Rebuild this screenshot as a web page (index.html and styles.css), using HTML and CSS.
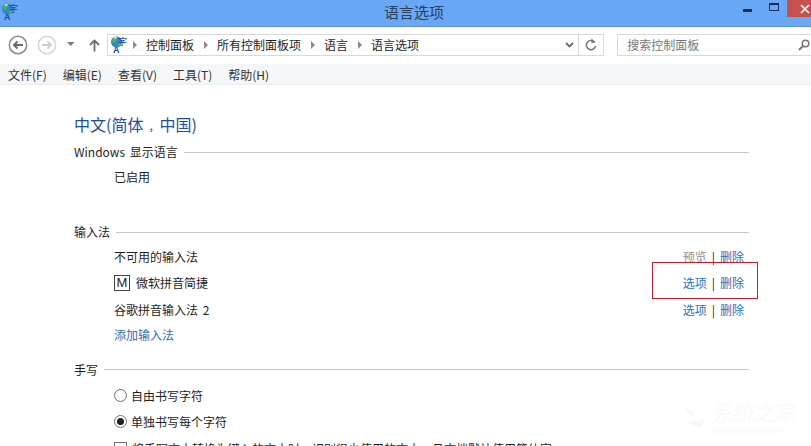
FILE: index.html
```html
<!DOCTYPE html>
<html lang="zh">
<head>
<meta charset="utf-8">
<title>语言选项</title>
<link rel="stylesheet" href="styles.css">
</head>
<body>
<div class="window">
  <header class="titlebar">
    <svg class="app-icon" width="17" height="17" viewBox="0 0 17 17"><circle cx="6.500" cy="6" r="5.500" fill="#2b86d6"/><path d="M2 3.500l3-2.500 2 1-.5 2.500-2 2.500-2-1zM8 8l2-1 1 1-2 3-1.500-.5z" fill="#5cb04a"/><path d="M4 1.500l2-.5 1 1-3 1z" fill="#e8f4ff"/><text x="3" y="16.500" class="ico-a">A</text><text x="8" y="9" class="ico-zi">字</text></svg>
    <span class="title-text">语言选项</span>
    <div class="win-btns">
      <span class="min-btn"></span>
      <span class="max-btn"></span>
      <span class="close-btn"><svg width="10" height="10" viewBox="0 0 10 10"><path d="M1 1l8 8M9 1l-8 8" stroke="#fff" stroke-width="1.600"/></svg></span>
    </div>
  </header>
  <nav class="navbar">
    <svg class="nav-round" width="20" height="20" viewBox="0 0 20 20"><circle cx="10" cy="10" r="8.700" fill="#fff" stroke="#8a8a8a" stroke-width="1.500"/><path d="M15 10H6M9.500 6.500L6 10l3.500 3.500" fill="none" stroke="#6a6a6a" stroke-width="2"/></svg>
    <svg class="nav-round fwd" width="20" height="20" viewBox="0 0 20 20"><circle cx="10" cy="10" r="8.700" fill="#fff" stroke="#d4d4d4" stroke-width="1.500"/><path d="M5 10h9M10.500 6.500L14 10l-3.500 3.500" fill="none" stroke="#cfcfcf" stroke-width="2"/></svg>
    <svg class="nav-drop" width="8" height="5" viewBox="0 0 8 5"><path d="M0 0h7.500L3.750 4z" fill="#7a7a7a"/></svg>
    <svg class="nav-up" width="11" height="14" viewBox="0 0 12 14"><path d="M6 14V2M1 7l5-5 5 5" fill="none" stroke="#6e6e6e" stroke-width="2"/></svg>
    <div class="address">
      <svg class="addr-icon" width="17" height="17" viewBox="0 0 17 17"><circle cx="6.500" cy="6" r="5.500" fill="#2b86d6"/><path d="M2 3.500l3-2.500 2 1-.5 2.500-2 2.500-2-1zM8 8l2-1 1 1-2 3-1.500-.5z" fill="#5cb04a"/><path d="M4 1.500l2-.5 1 1-3 1z" fill="#e8f4ff"/><text x="3" y="16.500" class="ico-a">A</text><text x="8" y="9" class="ico-zi">字</text></svg>
      <span class="crumb-arrow"></span><span class="crumb">控制面板</span>
      <span class="crumb-arrow"></span><span class="crumb">所有控制面板项</span>
      <span class="crumb-arrow"></span><span class="crumb">语言</span>
      <span class="crumb-arrow"></span><span class="crumb">语言选项</span>
      <svg class="addr-chev" width="9" height="6" viewBox="0 0 9 6"><path d="M1 1l3.500 3.500L8 1" fill="none" stroke="#6a6a6a" stroke-width="1.800"/></svg>
      <span class="addr-refresh"><svg width="12" height="13" viewBox="0 0 12 13"><path d="M9.800 4.500A4.600 4.600 0 1 0 10.500 8" fill="none" stroke="#7a7a7a" stroke-width="1.600"/><path d="M6.500 0.500v5l3.800-1.500z" fill="#7a7a7a"/></svg></span>
    </div>
    <div class="search">
      <span>搜索控制面板</span>
      <svg width="12" height="12" viewBox="0 0 12 12"><circle cx="7.500" cy="4.500" r="3.300" fill="none" stroke="#777" stroke-width="1.600"/><path d="M5 7l-4 4" stroke="#777" stroke-width="2"/></svg>
    </div>
  </nav>
  <div class="menubar">
    <span>文件(F)</span><span>编辑(E)</span><span>查看(V)</span><span>工具(T)</span><span>帮助(H)</span>
  </div>
  <main class="content">
    <h1 class="lang-name">中文(简体<span class="comma">，</span>中国)</h1>
    <div class="section-head first-head"><span>Windows 显示语言</span></div>
    <p class="enabled">已启用</p>

    <div class="section-head ime-head"><span>输入法</span></div>
    <div class="ime-row"><span class="ime-name">不可用的输入法</span><span class="actions"><span class="muted">预览</span><i>|</i><a>删除</a></span></div>
    <div class="ime-row"><span class="ime-name"><span class="m-icon">M</span>微软拼音简捷</span><span class="actions"><a>选项</a><i>|</i><a>删除</a><span class="highlight"></span></span></div>
    <div class="ime-row"><span class="ime-name">谷歌拼音输入法 2</span><span class="actions"><a>选项</a><i>|</i><a>删除</a></span></div>
    <a class="add-ime">添加输入法</a>

    <div class="section-head hand-head"><span>手写</span></div>
    <label class="radio-row"><span class="radio"></span>自由书写字符</label>
    <label class="radio-row"><span class="radio on"></span>单独书写每个字符</label>
    <label class="check-row"><span class="check"></span>将手写文本转换为键入的文本时，识别很少使用的文本，且文档默认使用简体字</label>
  </main>
  <div class="watermark">
    <svg class="wm-logo" width="28" height="30" viewBox="0 0 28 30"><path d="M2 3l12 8-8 1 10 6 8-4-6 10-14-6 8-1z" fill="#f7f7f7"/></svg>
    <div class="wm-text"><div class="wm-name">系统之家</div><div class="wm-url">XITONGZHIJIA.NET</div></div>
  </div>
</div>
</body>
</html>
```
FILE: styles.css
```css
* { box-sizing: border-box; }
html, body { margin: 0; padding: 0; height: 100%; overflow: hidden; }
body { background: #fff; font-family: "Noto Sans CJK SC", "Liberation Sans", sans-serif; font-size: 12px; color: #1e1e1e; }
.window { position: relative; width: 811px; height: 446px; overflow: hidden; }

.ico-a { font-family: "Liberation Sans", sans-serif; font-size: 9px; font-weight: 700; fill: #1c3fa8; }
.ico-zi { font-family: "Noto Sans CJK SC", sans-serif; font-size: 9px; fill: #1c3fa8; }

.titlebar { height: 27px; background: #69a8f5; border-bottom: 1px solid #5f90cc; display: flex; align-items: flex-start; position: relative; }
.app-icon { margin: 3px 0 0 1px; }
.title-text { position: absolute; left: 384px; top: 1px; font-size: 15px; line-height: 22px; color: #2c3e58; }
.win-btns { margin-left: auto; display: flex; align-items: flex-start; }
.min-btn { width: 9px; height: 3px; background: #14305a; margin: 9px 17px 0 0; }
.max-btn { width: 10px; height: 8px; border: 1px solid #14305a; border-top-width: 2px; margin: 3px 8px 0 0; }
.close-btn { width: 24px; height: 17px; background: #c75050; display: flex; align-items: center; justify-content: flex-end; padding-right: 1px; overflow: hidden; }

.navbar { height: 37px; display: flex; align-items: center; padding: 0 0 2px 8px; }
.nav-round { margin-right: 9px; }
.nav-round.fwd { margin-right: 10px; }
.nav-drop { margin-right: 14px; }
.nav-up { margin-right: 7px; }
.address { width: 498px; height: 22px; border: 1px solid #d9d9d9; display: flex; align-items: center; padding-left: 2px; font-size: 12px; }
.addr-icon { margin-right: 6px; }
.crumb-arrow { width: 0; height: 0; border-left: 4px solid #8a8a8a; border-top: 4px solid transparent; border-bottom: 4px solid transparent; margin-right: 9px; }
.crumb { margin-right: 10px; }
.addr-chev { margin-left: auto; margin-right: 4px; }
.addr-refresh { width: 25px; height: 20px; border-left: 1px solid #d9d9d9; display: flex; align-items: center; justify-content: center; }
.search { width: 194px; height: 22px; margin-left: 13px; border: 1px solid #d9d9d9; border-right: 0; display: flex; align-items: center; justify-content: space-between; padding: 0 1px 0 9px; color: #777; font-size: 12px; }

.menubar { height: 21px; background: #f5f6f7; border-bottom: 1px solid #eceded; display: flex; gap: 16px; padding-left: 8px; align-items: center; font-size: 12px; color: #333; }

.content { padding: 0 62px 0 74px; }
.lang-name { margin: 28px 0 0; font-size: 16px; line-height: 22px; font-weight: 400; color: #1f4f9c; }
.comma { font-size: 11px; padding-left: 5px; }
.section-head { display: flex; align-items: center; gap: 6px; font-size: 12px; line-height: 18px; word-spacing: 2px; }
.section-head::after { content: ""; flex: 1; height: 1px; background: #c8c8c8; }
.first-head { margin-top: 6px; }
.enabled { margin: 7px 0 0 40px; line-height: 18px; }
.ime-head { margin-top: 37px; }
.ime-row { display: flex; justify-content: space-between; align-items: center; padding-left: 40px; height: 26.500px; }
.ime-head + .ime-row { margin-top: 2px; }
.ime-name { display: flex; align-items: center; word-spacing: 2px; }
.m-icon { width: 16px; height: 16px; border: 1px solid #444; display: flex; align-items: center; justify-content: center; font-family: "Liberation Sans", sans-serif; font-size: 13px; margin-right: 6px; line-height: 1; }
.actions { position: relative; display: flex; align-items: center; margin-right: 5px; color: #333; }
.actions a { color: #2a72b8; }
.actions .muted { color: #8e8e8e; }
.actions i { font-style: normal; margin: 0 5px; font-size: 12px; color: #222; }
.highlight { position: absolute; left: -31px; top: -12px; width: 106px; height: 37px; border: 1px solid #c21f2a; }
.add-ime { display: block; margin: 3px 0 0 40px; color: #2a72b8; line-height: 18px; }
.hand-head { margin-top: 17px; }
.radio-row { display: flex; align-items: center; margin: 7px 0 0 40px; line-height: 20px; }
.radio-row + .radio-row { margin-top: 6px; }
.radio { width: 13px; height: 13px; border: 1px solid #707070; border-radius: 50%; background: #fff; margin-right: 4px; position: relative; }
.radio.on::after { content: ""; position: absolute; left: 2px; top: 2px; width: 7px; height: 7px; border-radius: 50%; background: #222; }
.check-row { display: flex; align-items: center; margin: 7px 0 0 40px; line-height: 20px; white-space: nowrap; }
.check { width: 13px; height: 13px; border: 1px solid #707070; margin-right: 5px; flex: none; }

.watermark { position: absolute; left: 682px; top: 396px; display: flex; gap: 3px; color: #f9f9f9; }
.wm-logo { margin-top: 8px; }
.wm-name { font-size: 21px; line-height: 30px; white-space: nowrap; }
.wm-url { font-size: 8px; line-height: 10px; white-space: nowrap; }
```
